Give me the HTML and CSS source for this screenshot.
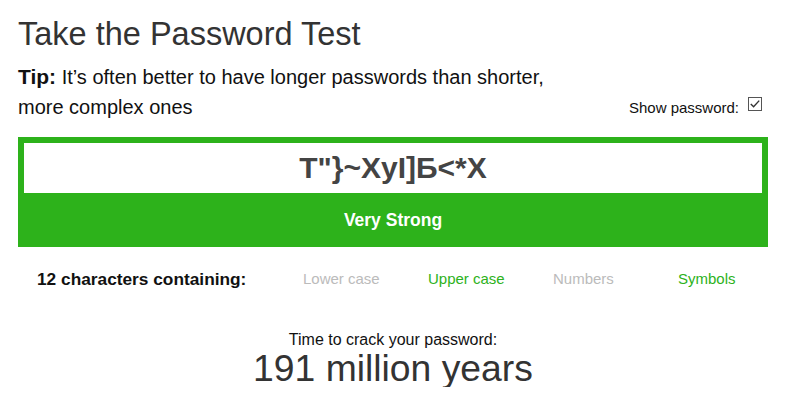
FILE: index.html
```html
<!DOCTYPE html>
<html>
<head>
<meta charset="utf-8">
<link rel="stylesheet" href="styles.css">
</head>
<body>
<div class="page">
  <h1 class="title">Take the Password Test</h1>
  <div class="tip-row">
    <p class="tip"><b>Tip:</b> It’s often better to have longer passwords than shorter,<br>more complex ones</p>
    <label class="show">Show password: <span class="checkbox"><svg width="14" height="14" viewBox="0 0 14 14"><rect x="0.5" y="0.5" width="13" height="13" fill="#fff" stroke="#555"/><path d="M2.8 7 L5.6 9.8 L11.2 3.6" fill="none" stroke="#333" stroke-width="1.4"/></svg></span></label>
  </div>
  <div class="meter">
    <div class="pw">T"}~XyI]Б&lt;*X</div>
    <div class="strength">Very Strong</div>
  </div>
  <div class="criteria">
    <div class="count">12 characters containing:</div>
    <div class="crit off">Lower case</div>
    <div class="crit on">Upper case</div>
    <div class="crit off">Numbers</div>
    <div class="crit on">Symbols</div>
  </div>
  <div class="crack">
    <div class="crack-label">Time to crack your password:</div>
    <div class="crack-time">191 million years</div>
  </div>
</div>
</body>
</html>
```
FILE: styles.css
```css
* { box-sizing: border-box; }
body {
  margin: 0;
  background: #fff;
  font-family: "Liberation Sans", Arial, sans-serif;
  color: #111;
}
.page {
  padding: 16px 30px 0 18px;
}
.title {
  margin: 0;
  font-size: 32.5px;
  font-weight: normal;
  color: #333;
  line-height: 36px;
}
.tip-row {
  display: flex;
  justify-content: space-between;
  align-items: flex-end;
  margin-top: 10px;
}
.tip {
  margin: 0;
  font-size: 20px;
  line-height: 30px;
}
.tip b { font-size: 21px; }
.show {
  font-size: 15px;
  display: flex;
  align-items: center;
  gap: 9px;
  margin-bottom: 6px;
  margin-right: 6px;
}
.checkbox { display: flex; margin-top: -7px; }
.meter {
  margin-top: 15px;
  background: #2db21b;
  padding: 6px 6px 0;
  height: 110px;
}
.pw {
  background: #fff;
  height: 50px;
  text-align: center;
  font-size: 30px;
  font-weight: bold;
  color: #444;
  line-height: 50px;
}
.strength {
  text-align: center;
  color: #fff;
  font-weight: bold;
  font-size: 17.5px;
  line-height: 54px;
}
.criteria {
  display: flex;
  align-items: center;
  margin-top: 22px;
  padding-left: 19px;
  line-height: 20px;
}
.count {
  flex: none;
  font-weight: bold;
  font-size: 17.3px;
  width: 266px;
}
.crit {
  flex: none;
  font-size: 15px;
  width: 125px;
}
.crit.off { color: #bbb; }
.crit.on { color: #2db21b; }
.crack {
  text-align: center;
  margin-top: 42px;
}
.crack-label { font-size: 16px; line-height: 18px; }
.crack-time { font-size: 37.3px; line-height: 38px; color: #333; }
```
